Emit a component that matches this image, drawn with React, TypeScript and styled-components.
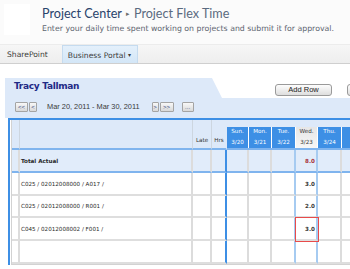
import React from "react";
import styled, { createGlobalStyle } from "styled-components";

const GlobalStyle = createGlobalStyle`
  html, body {
    margin: 0;
    padding: 0;
    background: #ffffff;
    overflow: hidden;
  }
  body {
    font-family: "DejaVu Sans", Verdana, sans-serif;
    color: #333;
  }
`;

interface Day {
  name: string;
  date: string;
  today?: boolean;
}

interface Line {
  label: string;
  value: string;
  selected?: boolean;
}

const days: Day[] = [
  { name: "Sun.", date: "3/20" },
  { name: "Mon.", date: "3/21" },
  { name: "Tue.", date: "3/22" },
  { name: "Wed.", date: "3/23", today: true },
  { name: "Thu.", date: "3/24" },
  { name: "Fri.", date: "3/25" },
];

const lines: Line[] = [
  { label: "C025 / 02012008000 / A017 /", value: "3.0" },
  { label: "C025 / 02012008000 / R001 /", value: "2.0" },
  { label: "C045 / 02012008002 / F001 /", value: "3.0", selected: true },
  { label: "", value: "" },
];

const TODAY = 3;

const App = () => {
  return (
    <Page>
      <GlobalStyle />
      <Masthead>
        <LogoBox />
        <TitleBlock>
          <Title>
            <Crumb>Project Center</Crumb>
            <Sep>▸</Sep>
            <Current>Project Flex Time</Current>
          </Title>
          <Subtitle>
            Enter your daily time spent working on projects and submit it for approval.
          </Subtitle>
        </TitleBlock>
      </Masthead>

      <NavBar>
        <NavItem>SharePoint</NavItem>
        <NavItem $active>
          Business Portal <Caret>▾</Caret>
        </NavItem>
      </NavBar>

      <Panel>
        <PanelHead>
          <NameTab>Tracy Tallman</NameTab>
          <Button $width={57}>Add Row</Button>
          <Button $width={40} $gap={15} />
        </PanelHead>

        <Toolbar>
          <PagerButton $width={13}>&lt;&lt;</PagerButton>
          <PagerButton $width={8}>&lt;</PagerButton>
          <DateRange>Mar 20, 2011 - Mar 30, 2011</DateRange>
          <PagerButton $width={7}>&gt;</PagerButton>
          <PagerButton $width={14}>&gt;&gt;</PagerButton>
          <PagerButton $width={12} $gap={8}>...</PagerButton>
        </Toolbar>

        <GridFrame>
          <Grid>
            <HeadCell />
            <HeadCell />
            <HeadCell $label>Late</HeadCell>
            <HeadCell $label $edge>Hrs</HeadCell>
            {days.map((d) => (
              <HeadDayCell key={d.name}>
                <DayBadge $today={d.today}>
                  <span>{d.name}</span>
                  <span>{d.date}</span>
                </DayBadge>
              </HeadDayCell>
            ))}

            <Cell $total />
            <Cell $total>
              <LabelText $bold>Total Actual</LabelText>
            </Cell>
            <Cell $total />
            <Cell $total $blue />
            {days.map((d, i) => (
              <Cell key={d.name} $total $light={i === TODAY - 1 || i === TODAY}>
                {i === TODAY && <Value $red>8.0</Value>}
              </Cell>
            ))}

            {lines.map((line, r) => (
              <React.Fragment key={r}>
                <Cell />
                <Cell>
                  <LabelText>{line.label}</LabelText>
                </Cell>
                <Cell />
                <Cell $blue />
                {days.map((d, i) => (
                  <Cell
                    key={d.name}
                    $light={i === TODAY - 1 || i === TODAY}
                    $selected={i === TODAY && line.selected}
                  >
                    {i === TODAY && <Value>{line.value}</Value>}
                  </Cell>
                ))}
              </React.Fragment>
            ))}
          </Grid>
        </GridFrame>
      </Panel>
    </Page>
  );
};

export default App;

const Page = styled.div`
  width: 420px;
`;

const Masthead = styled.div`
  display: flex;
  height: 44px;
  background: #fbfbfb;
  padding: 4px 0 0 4px;
  box-sizing: border-box;
`;

const LogoBox = styled.div`
  width: 26px;
  height: 31px;
  background: #ffffff;
`;

const TitleBlock = styled.div`
  display: flex;
  flex-direction: column;
  margin-left: 12px;
`;

const Title = styled.div`
  font-family: Lato, "Segoe UI", sans-serif;
  font-size: 12.6px;
  line-height: 18px;
  margin-top: 1px;
  white-space: nowrap;
`;

const Crumb = styled.span`
  color: #29436b;
`;

const Sep = styled.span`
  color: #6f6f6f;
  font-size: 6.5px;
  margin: 0 4px;
  vertical-align: 2px;
`;

const Current = styled.span`
  color: #5a6a80;
`;

const Subtitle = styled.div`
  font-size: 7.8px;
  line-height: 12px;
  color: #5d6570;
  white-space: nowrap;
`;

const NavBar = styled.div`
  display: flex;
  align-items: flex-end;
  height: 20px;
  background: linear-gradient(#f6f6f6, #eeeeee);
  border-top: 1px solid #ececec;
  border-bottom: 1px solid #cfcfcf;
  box-sizing: border-box;
  padding-left: 1px;
`;

const NavItem = styled.div<{ $active?: boolean }>`
  height: 17px;
  line-height: 17px;
  padding: 0 6px 0 5px;
  margin-right: ${(p) => (p.$active ? 0 : 7)}px;
  font-size: 7.6px;
  color: #3b3b3b;
  white-space: nowrap;
  background: ${(p) => (p.$active ? "linear-gradient(#e4f0fb, #d3e6f7)" : "transparent")};
  border: 1px solid ${(p) => (p.$active ? "#c5dbef" : "transparent")};
  border-bottom: none;
`;

const Caret = styled.span`
  font-size: 6px;
  vertical-align: 1px;
`;

const Panel = styled.div`
  margin-top: 14px;
  margin-left: 5px;
`;

const PanelHead = styled.div`
  display: flex;
  align-items: flex-start;
  height: 20px;
`;

const NameTab = styled.div`
  width: 217px;
  height: 20px;
  box-sizing: border-box;
  padding: 1px 0 0 9px;
  background: #dde9f9;
  clip-path: polygon(0 0, 207px 0, 100% 100%, 0 100%);
  font-family: "DejaVu Sans", Verdana, sans-serif;
  font-weight: bold;
  font-size: 9px;
  line-height: 14px;
  color: #1f2a86;
  letter-spacing: -0.3px;
`;

const Button = styled.div<{ $width: number; $gap?: number }>`
  width: ${(p) => p.$width}px;
  height: 12px;
  margin-top: 6px;
  margin-left: ${(p) => p.$gap ?? 53}px;
  flex-shrink: 0;
  box-sizing: border-box;
  border: 1px solid #9a9a9a;
  border-radius: 3px;
  background: linear-gradient(#fdfdfd, #dedede);
  font-family: "Liberation Sans", Arial, sans-serif;
  font-size: 7.5px;
  line-height: 10px;
  text-align: center;
  color: #222;
`;

const Toolbar = styled.div`
  display: flex;
  align-items: flex-start;
  height: 20px;
  background: #dde9f9;
  padding: 4px 0 0 9px;
  box-sizing: border-box;
`;

const PagerButton = styled.div<{ $width: number; $gap?: number }>`
  width: ${(p) => p.$width}px;
  height: 10px;
  margin-left: ${(p) => p.$gap ?? 1}px;
  box-sizing: border-box;
  border: 1px solid #a4a4a4;
  border-radius: 1px;
  background: linear-gradient(#f8f8f8, #d9d9d9);
  font-family: "Liberation Sans", Arial, sans-serif;
  font-size: 6px;
  line-height: 8px;
  text-align: center;
  color: #2d3f7a;
`;

const DateRange = styled.div`
  margin: 0 11px 0 10px;
  font-family: "Liberation Sans", Arial, sans-serif;
  font-size: 7.4px;
  line-height: 10px;
  color: #3a3a3a;
  white-space: nowrap;
`;

const GridFrame = styled.div`
  margin-left: 3px;
  border-left: 2px solid #3d8fe5;
  border-top: 2px solid #3d8fe5;
  padding-left: 1px;
  background: #fff;
`;

const Grid = styled.div`
  display: grid;
  grid-template-columns: 8px 173px 19px 15px 22px 23px 24px 22px 24px 60px;
  grid-template-rows: 30px 23px 23px 22px 23px 23px;
  border-left: 1px solid #d2d2d2;
  border-bottom: 1px solid #d2d2d2;
  width: max-content;
`;

const HeadCell = styled.div<{ $label?: boolean; $edge?: boolean }>`
  display: flex;
  align-items: flex-end;
  justify-content: center;
  box-sizing: border-box;
  background: #dde9f9;
  border-right: 1px solid ${(p) => (p.$edge ? "#dde9f9" : "#cdd6e0")};
  border-bottom: 2px solid #7fb4ee;
  padding-bottom: 4px;
  font-size: 5.6px;
  line-height: 7px;
  color: #333;
`;

const HeadDayCell = styled.div`
  display: flex;
  box-sizing: border-box;
  background: #dde9f9;
  border-bottom: 2px solid #7fb4ee;
  padding-top: 7px;
`;

const DayBadge = styled.div<{ $today?: boolean }>`
  flex: 1;
  display: flex;
  flex-direction: column;
  justify-content: space-between;
  align-items: center;
  padding: 1px 0 2px;
  background: ${(p) => (p.$today ? "linear-gradient(#e6e6e6, #f7f7f7)" : "#3d8fe5")};
  border-right: 1px solid #ffffff;
  color: ${(p) => (p.$today ? "#333" : "#fff")};
  font-size: 5.6px;
  line-height: 7px;
  white-space: nowrap;
  overflow: hidden;
`;

const Cell = styled.div<{
  $total?: boolean;
  $blue?: boolean;
  $light?: boolean;
  $selected?: boolean;
}>`
  display: flex;
  align-items: center;
  box-sizing: border-box;
  background: ${(p) => (p.$total ? "#e1ecfa" : "#fff")};
  border-right: ${(p) =>
    p.$blue ? "2px solid #3d8fe5" : p.$light ? "2px solid #a6cbf1" : "2px solid #dcdcdc"};
  border-bottom: ${(p) => (p.$total ? "2px solid #7fb4ee" : "2px solid #dedede")};
  outline: ${(p) => (p.$selected ? "1px solid #e84b4b" : "none")};
  outline-offset: 0;
  position: relative;
  z-index: ${(p) => (p.$selected ? 1 : 0)};
  overflow: hidden;
`;

const LabelText = styled.span<{ $bold?: boolean }>`
  padding-left: 1px;
  font-size: 5.6px;
  font-weight: ${(p) => (p.$bold ? "bold" : "normal")};
  color: #2a2a2a;
  white-space: nowrap;
`;

const Value = styled.span<{ $red?: boolean }>`
  margin-left: auto;
  padding-right: 1px;
  font-size: 5.6px;
  font-weight: bold;
  color: ${(p) => (p.$red ? "#a8333a" : "#3a3a3a")};
`;
